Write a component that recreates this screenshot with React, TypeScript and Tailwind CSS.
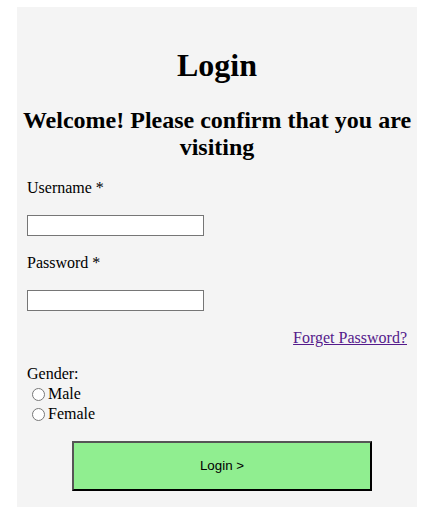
import React, { useState } from 'react';

const App: React.FC = () => {
  const [gender, setGender] = useState('');

  return (
    <div className="min-h-screen bg-white pt-[7px] pl-[17px] font-['Liberation_Serif',serif] text-black">
      <form
        className="w-[400px] bg-[#f4f4f4] pt-[40px] pb-[16px] px-[10px]"
        onSubmit={(e) => e.preventDefault()}
      >
        <h1 className="text-center text-[32px] font-bold leading-[36px]">Login</h1>
        <h2 className="-mx-[10px] mt-[24px] text-center text-[24px] font-bold leading-[26.6px]">
          Welcome! Please confirm that you are visiting
        </h2>

        <label className="mt-[19px] block text-[16px] leading-[18px]">Username *</label>
        <input
          type="text"
          className="mt-[18px] block h-[21px] w-[177px] border border-[#767676] bg-white px-[2px] text-[13px]"
        />

        <label className="mt-[18px] block text-[16px] leading-[18px]">Password *</label>
        <input
          type="password"
          className="mt-[18px] block h-[21px] w-[177px] border border-[#767676] bg-white px-[2px] text-[13px]"
        />

        <div className="mt-[18px] text-right text-[16px] leading-[18px]">
          <a href="#" className="text-[#551a8b] underline">
            Forget Password?
          </a>
        </div>

        <div className="mt-[18px] text-[16px] leading-[18px]">Gender:</div>
        <label className="flex h-[20px] items-end text-[16px] leading-[18px]">
          <input
            type="radio"
            name="gender"
            checked={gender === 'male'}
            onChange={() => setGender('male')}
            className="mr-[3px] ml-[5px] mb-[2px] h-[13px] w-[13px]"
          />
          Male
        </label>
        <label className="flex h-[20px] items-end text-[16px] leading-[18px]">
          <input
            type="radio"
            name="gender"
            checked={gender === 'female'}
            onChange={() => setGender('female')}
            className="mr-[3px] ml-[5px] mb-[2px] h-[13px] w-[13px]"
          />
          Female
        </label>

        <button
          type="submit"
          className="mt-[18px] ml-[45px] block h-[50px] w-[300px] border-2 border-t-[#555] border-l-[#555] border-b-black border-r-black bg-[#90ee90] font-['Liberation_Sans',sans-serif] text-[13.33px]"
        >
          Login &gt;
        </button>
      </form>
    </div>
  );
};

export default App;
